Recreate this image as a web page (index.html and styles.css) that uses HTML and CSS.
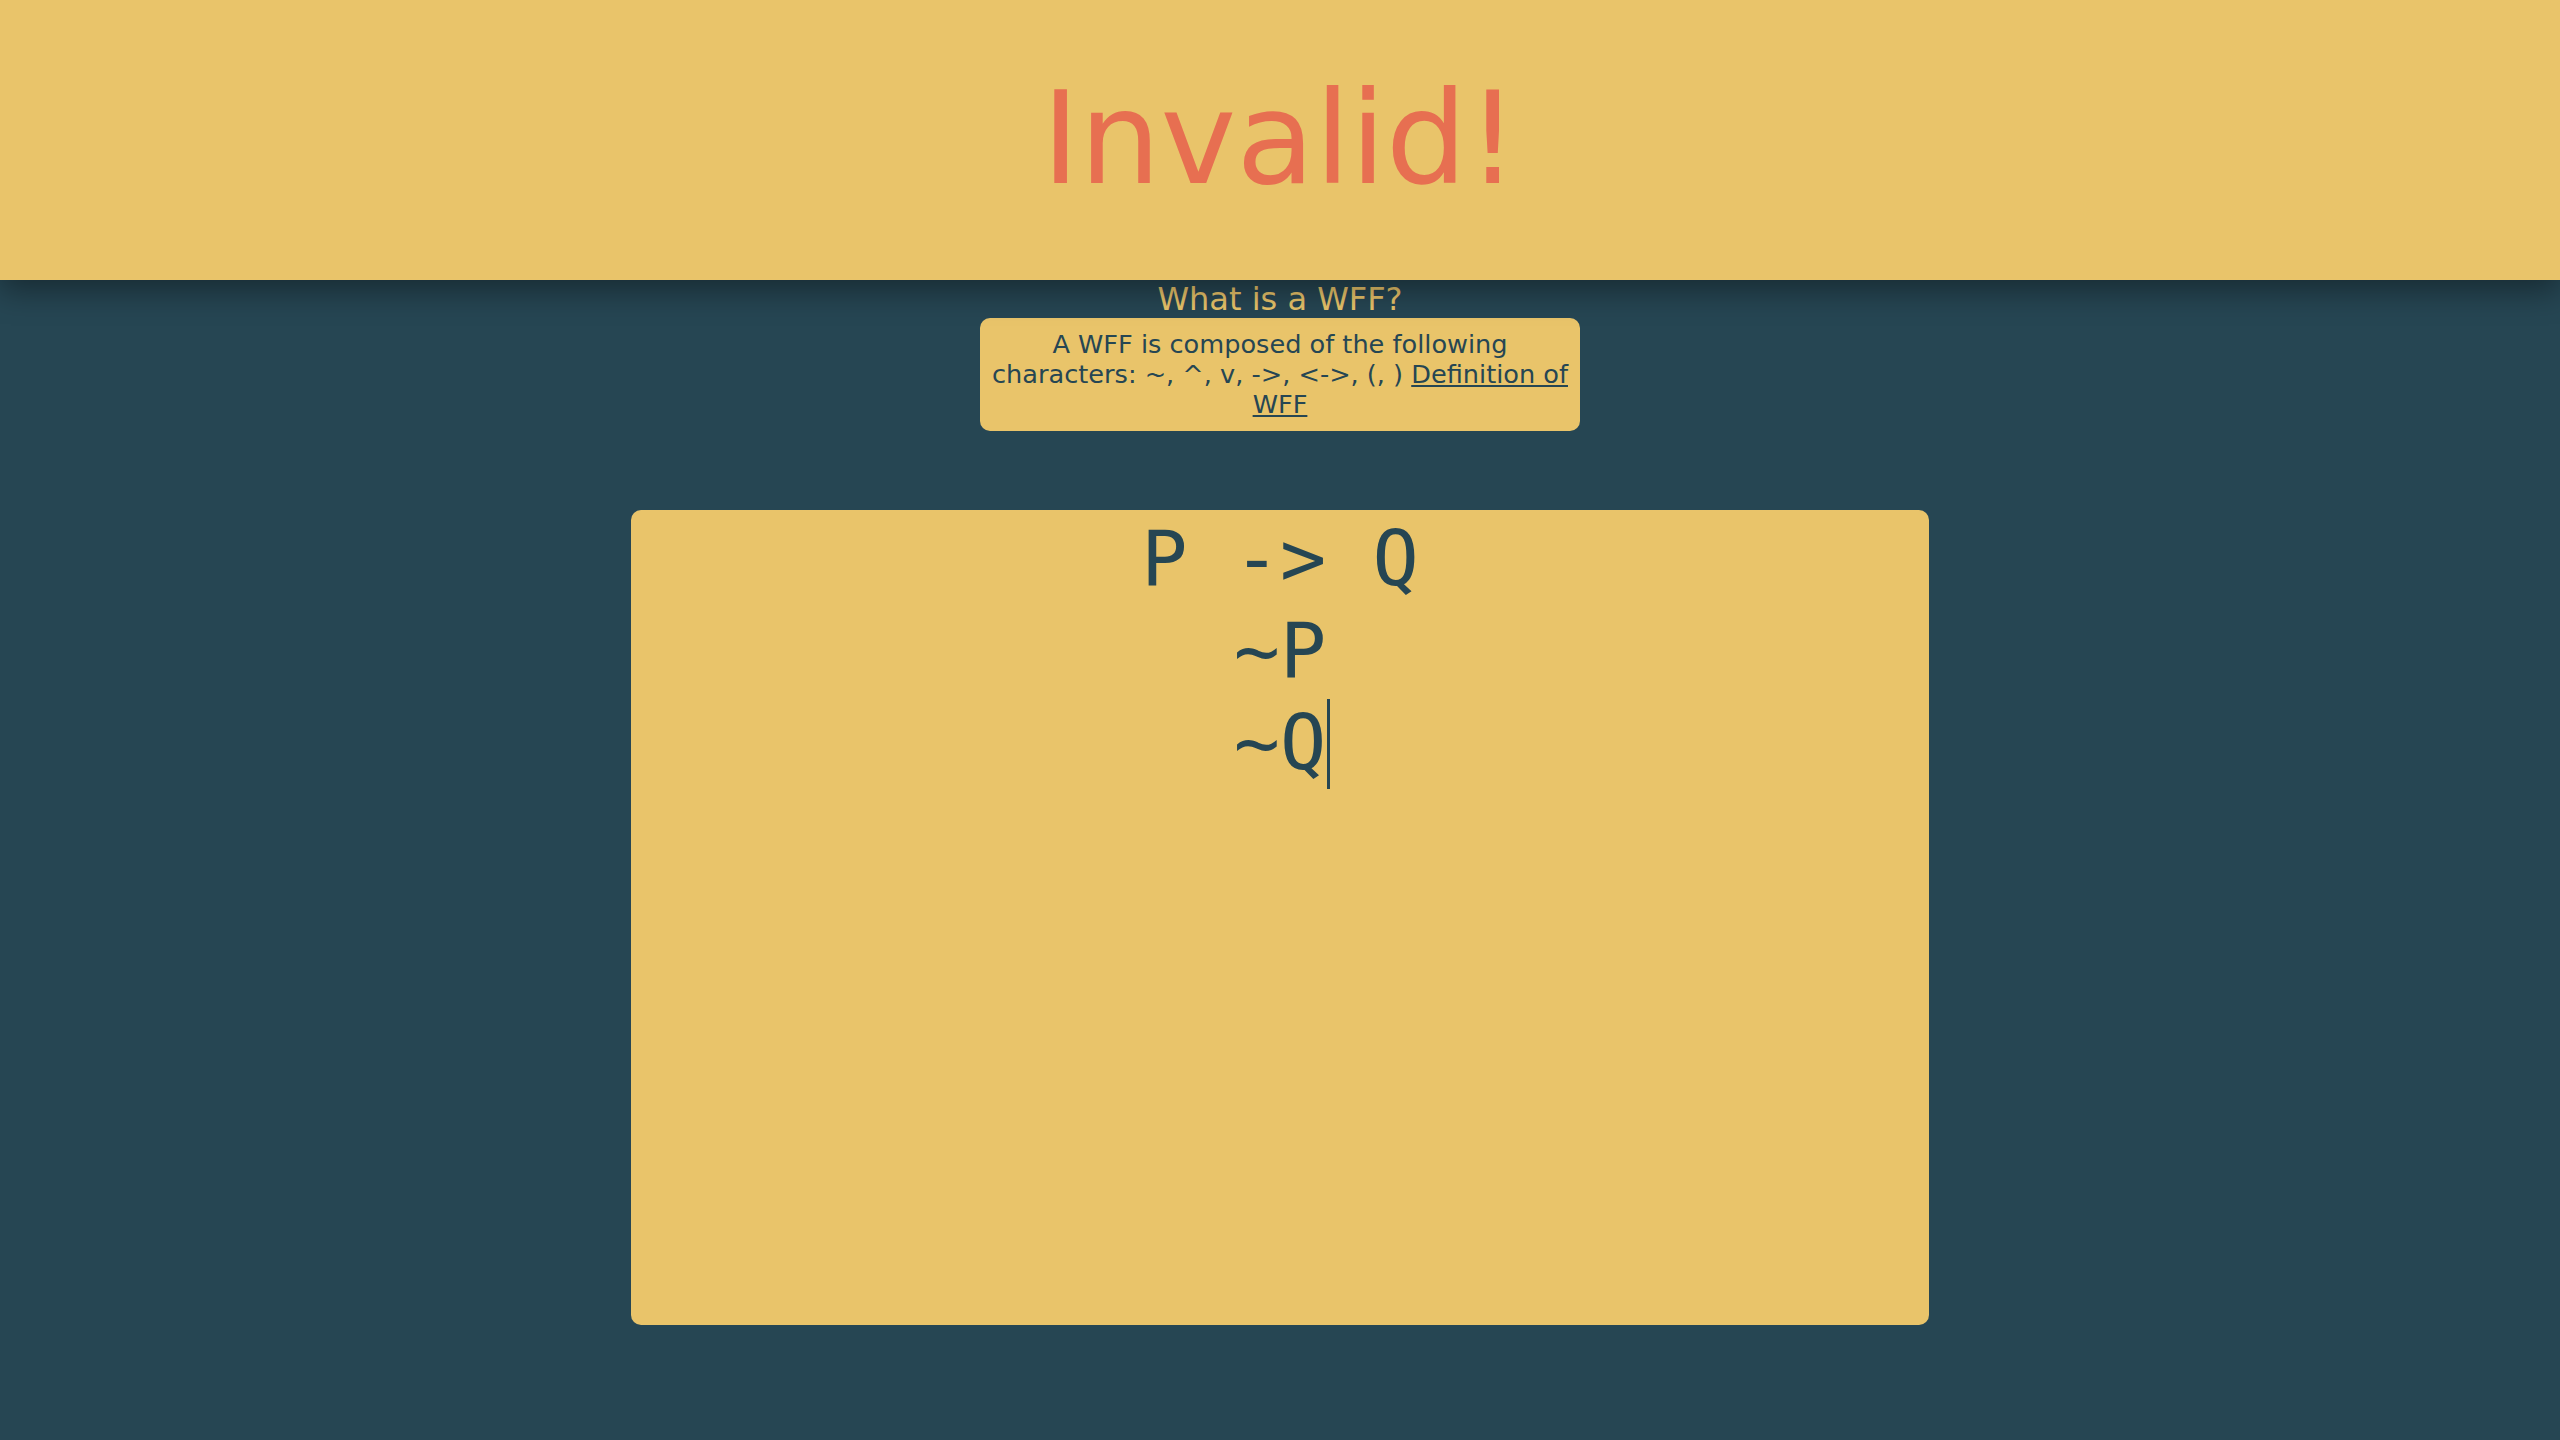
FILE: index.html
```html
<!DOCTYPE html>
<html lang="en">
<head>
<meta charset="utf-8">
<title>WFF Checker</title>
<link rel="stylesheet" href="styles.css">
</head>
<body>
<header class="banner">
  <h1 class="status">Invalid!</h1>
</header>
<main class="content">
  <h2 class="question">What is a WFF?</h2>
  <div class="info">A WFF is composed of the following characters: ~, ^, v, -&gt;, &lt;-&gt;, (, ) <a class="info-link" href="#wff">Definition of WFF</a></div>
  <div class="editor" role="textbox" aria-multiline="true"><div class="line">P -&gt; Q</div><div class="line">~P</div><div class="line">~Q<span class="caret"></span></div></div>
</main>
</body>
</html>
```

FILE: styles.css
```css
html, body {
  margin: 0;
  padding: 0;
}

body {
  background: #264653;
  font-family: "DejaVu Sans", "Noto Sans", sans-serif;
  min-height: 1440px;
}

.banner {
  box-sizing: border-box;
  height: 280px;
  padding-top: 64px;
  background: #e9c46a;
  box-shadow: 0 10px 30px rgba(0, 0, 0, 0.4);
  text-align: center;
  position: relative;
}

.status {
  margin: 0;
  font-size: 128px;
  font-weight: normal;
  line-height: normal;
  color: #e76f51;
}

.content {
  display: flex;
  flex-direction: column;
  align-items: center;
}

.question {
  margin: 0;
  font-size: 32px;
  font-weight: normal;
  line-height: normal;
  color: #e9c46a;
  text-align: center;
}

.info {
  box-sizing: border-box;
  width: 600px;
  padding: 11px 10px 12px;
  background: #e9c46a;
  border-radius: 10px;
  color: #264653;
  font-size: 25.6px;
  line-height: normal;
  text-align: center;
}

.info-link {
  color: #264653;
  text-decoration: underline;
}

.editor {
  box-sizing: border-box;
  width: 1298px;
  height: 815px;
  margin-top: 79px;
  padding: 3px;
  border-radius: 10px;
  background: #e9c46a;
  color: #264653;
  font-family: "DejaVu Sans Mono", monospace;
  font-size: 76.8px;
  line-height: 1.2;
  text-align: center;
  white-space: pre;
}

.caret {
  display: inline-block;
  width: 3px;
  height: 1.17em;
  margin-left: 1px;
  margin-right: -4px;
  vertical-align: top;
  margin-top: 2px;
  background: #264653;
}
```
